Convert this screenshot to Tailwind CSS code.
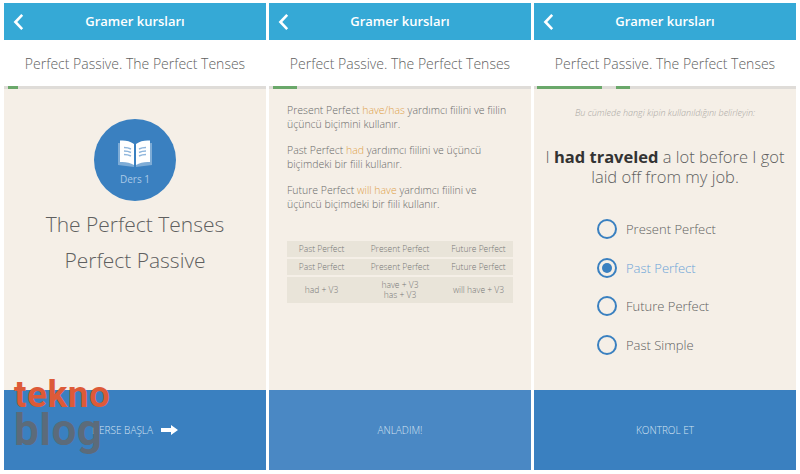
<!DOCTYPE html>
<html>
<head>
<meta charset="utf-8">
<script src="https://cdn.jsdelivr.net/npm/@tailwindcss/browser@4"></script>
</head>
<body class="bg-white font-['Open_Sans',sans-serif] font-light text-[#5f5f5f]">
<div class="relative w-[800px] h-[474px] overflow-hidden flex gap-[3px] px-[4px] pt-[3px] pb-[4px]">

  <section class="flex-1 flex flex-col">
    <header class="h-[37px] bg-[#35a9d6] flex items-center justify-center relative shrink-0">
      <svg class="absolute left-[9px] top-[10px]" width="11" height="18" viewBox="0 0 11 18" fill="none"><path d="M9.2 1.8 2.4 9l6.8 7.2" stroke="#fff" stroke-width="2.6"/></svg>
      <span class="text-[13px] font-semibold text-white">Gramer kursları</span>
    </header>
    <div class="h-[46px] bg-white flex items-center justify-center text-[14px] shrink-0">Perfect Passive. The Perfect Tenses</div>
    <div class="h-[3px] bg-[#dfdcd8] shrink-0 pl-[4px]"><div class="h-full w-[10px] bg-[#6aa86a]"></div></div>
    <div class="flex-1 bg-[#f5efe7] flex flex-col items-center pt-[30px]">
      <div class="w-[82px] h-[82px] rounded-full bg-[#3a80c0] flex flex-col items-center pt-[20px] shrink-0">
        <svg width="36" height="29" viewBox="0 0 36 29" fill="none">
          <path d="M1 4v22l16 2V5z" fill="#fff" fill-opacity=".35"/>
          <path d="M35 4v22l-16 2V5z" fill="#fff" fill-opacity=".35"/>
          <path d="M3 1.500c5-.5 10 .5 14 3.500v21c-4-2.500-9-3.500-14-3z" fill="#fff"/>
          <path d="M33 1.500c-5-.5-10 .5-14 3.500v21c4-2.500 9-3.500 14-3z" fill="#fff"/>
          <path d="M7 8.500c2.500 0 5 .5 7 1.500M7 12c2.500 0 5 .5 7 1.500M7 15.500c2.500 0 5 .5 7 1.500M29 8.500c-2.500 0-5 .5-7 1.500M29 12c-2.500 0-5 .5-7 1.500M29 15.500c-2.500 0-5 .5-7 1.500" stroke="#8fb6dc" stroke-width="1.400"/>
        </svg>
        <span class="text-[10px] leading-[12px] text-[#a9c8e6] mt-[5px] font-normal">Ders 1</span>
      </div>
      <div class="text-[21px] leading-[28px] mt-[9px]">The Perfect Tenses</div>
      <div class="text-[21px] leading-[28px] mt-[8px]">Perfect Passive</div>
    </div>
    <button class="h-[80px] bg-[#3a80c0] flex items-center justify-center gap-[8px] text-[10px] text-[#d3e2f1] shrink-0">
      DERSE BAŞLA
      <svg width="17" height="10" viewBox="0 0 17 10"><path d="M0 3h10V0l7 5-7 5V7H0z" fill="#fff"/></svg>
    </button>
  </section>

  <section class="flex-1 flex flex-col">
    <header class="h-[37px] bg-[#35a9d6] flex items-center justify-center relative shrink-0">
      <svg class="absolute left-[9px] top-[10px]" width="11" height="18" viewBox="0 0 11 18" fill="none"><path d="M9.2 1.800 2.400 9l6.800 7.200" stroke="#fff" stroke-width="2.600"/></svg>
      <span class="text-[13px] font-semibold text-white">Gramer kursları</span>
    </header>
    <div class="h-[46px] bg-white flex items-center justify-center text-[14px] shrink-0">Perfect Passive. The Perfect Tenses</div>
    <div class="h-[3px] bg-[#dfdcd8] shrink-0 pl-[4px]"><div class="h-full w-[24px] bg-[#6aa86a]"></div></div>
    <div class="flex-1 bg-[#f5efe7] px-[18px] pt-[15px] text-[10.500px] leading-[13.500px] text-[#6a6a6a]">
      <p>Present Perfect <span class="text-[#e0a24a]">have/has</span> yardımcı fiilini ve fiilin üçüncü biçimini kullanır.</p>
      <p class="mt-[13px]">Past Perfect <span class="text-[#e0a24a]">had</span> yardımcı fiilini ve üçüncü biçimdeki bir fiili kullanır.</p>
      <p class="mt-[13px]">Future Perfect <span class="text-[#e0a24a]">will have</span> yardımcı fiilini ve üçüncü biçimdeki bir fiili kullanır.</p>
      <div class="mt-[30px] flex flex-col gap-[2px] text-[8.500px] leading-[10px] text-[#777] text-center">
        <div class="h-[16px] bg-[#e9e4d9] grid grid-cols-[69px_88px_1fr] items-center"><span>Past Perfect</span><span>Present Perfect</span><span>Future Perfect</span></div>
        <div class="h-[16px] bg-[#e9e4d9] grid grid-cols-[69px_88px_1fr] items-center"><span>Past Perfect</span><span>Present Perfect</span><span>Future Perfect</span></div>
        <div class="h-[26px] bg-[#e9e4d9] grid grid-cols-[69px_88px_1fr] items-center"><span>had + V3</span><span>have + V3<br>has + V3</span><span>will have + V3</span></div>
      </div>
    </div>
    <button class="h-[80px] bg-[#4a88c4] flex items-center justify-center text-[10px] text-[#d3e2f1] shrink-0">ANLADIM!</button>
  </section>

  <section class="flex-1 flex flex-col">
    <header class="h-[37px] bg-[#35a9d6] flex items-center justify-center relative shrink-0">
      <svg class="absolute left-[9px] top-[10px]" width="11" height="18" viewBox="0 0 11 18" fill="none"><path d="M9.200 1.800 2.400 9l6.800 7.200" stroke="#fff" stroke-width="2.600"/></svg>
      <span class="text-[13px] font-semibold text-white">Gramer kursları</span>
    </header>
    <div class="h-[46px] bg-white flex items-center justify-center text-[14px] shrink-0">Perfect Passive. The Perfect Tenses</div>
    <div class="h-[3px] bg-[#dfdcd8] shrink-0 flex pl-[3px] gap-[14px]"><div class="h-full w-[65px] bg-[#6aa86a]"></div><div class="h-full w-[14px] bg-[#6aa86a]"></div></div>
    <div class="flex-1 bg-[#f5efe7] flex flex-col items-center pt-[18px]">
      <div class="text-[9px] leading-[12px] italic text-[#a9a6a2]">Bu cümlede hangi kipin kullanıldığını belirleyin:</div>
      <div class="text-[16.500px] leading-[20px] text-center mt-[28px] w-[250px]">I <b class="font-bold text-[#333]">had traveled</b> a lot before I got laid off from my job.</div>
      <div class="mt-[32px] flex flex-col gap-[18.500px] self-start pl-[63px] text-[13px] leading-[20px]">
        <div class="flex items-center gap-[9px]"><span class="w-[20px] h-[20px] rounded-full border-2 border-[#3a80c0]"></span>Present Perfect</div>
        <div class="flex items-center gap-[9px] text-[#6ba4d8]"><span class="w-[20px] h-[20px] rounded-full border-2 border-[#3a80c0] flex items-center justify-center"><span class="w-[10px] h-[10px] rounded-full bg-[#3a80c0]"></span></span>Past Perfect</div>
        <div class="flex items-center gap-[9px]"><span class="w-[20px] h-[20px] rounded-full border-2 border-[#3a80c0]"></span>Future Perfect</div>
        <div class="flex items-center gap-[9px]"><span class="w-[20px] h-[20px] rounded-full border-2 border-[#3a80c0]"></span>Past Simple</div>
      </div>
    </div>
    <button class="h-[80px] bg-[#3a80c0] flex items-center justify-center text-[10px] text-[#d3e2f1] shrink-0">KONTROL ET</button>
  </section>

  <div class="absolute left-[14px] top-[377px] font-['Roboto',sans-serif] font-bold leading-[36px] text-[37px] tracking-[0.5px]">
    <div class="text-[#dd5a38]">tekno</div>
    <div class="text-[#5c6b7a] text-[44px] -mt-[1px] tracking-[0.5px]">blog</div>
  </div>
</div>
</body>
</html>
